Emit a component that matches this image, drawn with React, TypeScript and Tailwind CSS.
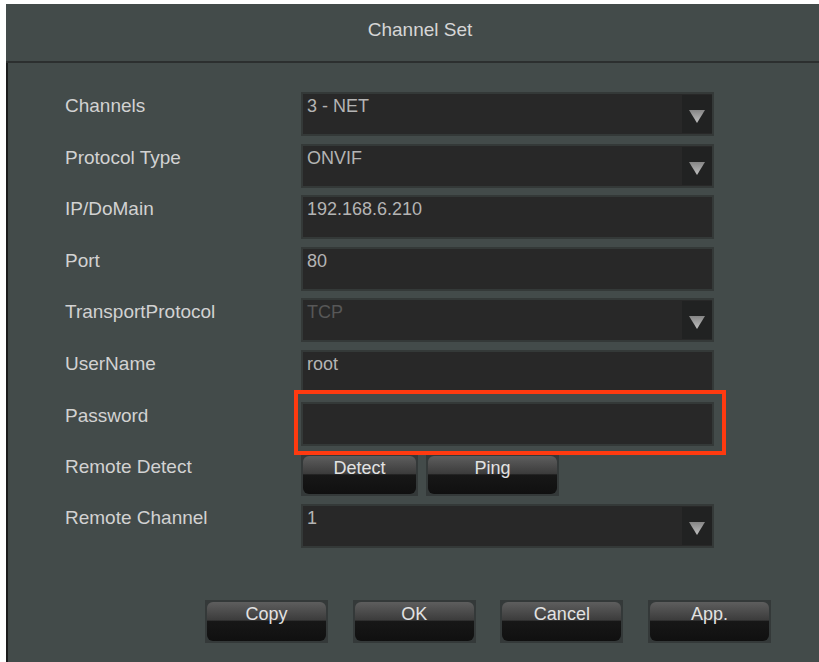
import React from 'react';

type Row = {
  label: string;
  value?: string;
  kind: 'select' | 'text' | 'buttons';
  dim?: boolean;
  marked?: boolean;
};

const rows: Row[] = [
  { label: 'Channels', value: '3 - NET', kind: 'select' },
  { label: 'Protocol Type', value: 'ONVIF', kind: 'select' },
  { label: 'IP/DoMain', value: '192.168.6.210', kind: 'text' },
  { label: 'Port', value: '80', kind: 'text' },
  { label: 'TransportProtocol', value: 'TCP', kind: 'select', dim: true },
  { label: 'UserName', value: 'root', kind: 'text' },
  { label: 'Password', value: '', kind: 'text', marked: true },
  { label: 'Remote Detect', kind: 'buttons' },
  { label: 'Remote Channel', value: '1', kind: 'select' },
];

const font = { fontFamily: '"Liberation Sans", Arial, sans-serif' };

function DropArrow() {
  return (
    <div className="w-[30px] my-[1px] bg-[#212222] flex items-end justify-center pb-[10px]">
      <svg width="16" height="13" viewBox="0 0 16 13">
        <defs>
          <linearGradient id="arrowFill" x1="0" y1="0" x2="0" y2="1">
            <stop offset="0" stopColor="#858585" />
            <stop offset="1" stopColor="#c0c0c0" />
          </linearGradient>
        </defs>
        <polygon points="0,0 16,0 8,13" fill="url(#arrowFill)" />
      </svg>
    </div>
  );
}

function Field({ row }: { row: Row }) {
  return (
    <div className="relative w-[413px] h-[44px] bg-[#282828] border-2 border-[#343938] flex">
      <div
        className={`flex-1 pl-[4px] pt-[3px] text-[18px] leading-[18px] ${
          row.dim ? 'text-[#575757]' : 'text-[#b4b4b4]'
        }`}
      >
        {row.value}
      </div>
      {row.kind === 'select' && <DropArrow />}
      {row.marked && (
        <div className="absolute left-[-9px] right-[-14px] top-[-14px] bottom-[-11px] border-4 border-[#ff3a10] pointer-events-none" />
      )}
    </div>
  );
}

function DvrButton({ text, w, h }: { text: string; w: string; h: string }) {
  return (
    <button className={`${w} ${h} p-[2px] bg-[#343939]`}>
      <div className="h-full w-full rounded-[6px] bg-[linear-gradient(to_bottom,#5e5e5e_0%,#3c3c3c_46%,#171717_50%,#101010_100%)] flex justify-center pt-[3px] text-[18px] leading-[18px] text-[#e2e2e2]">
        {text}
      </div>
    </button>
  );
}

export default function App() {
  return (
    <div className="w-[819px] h-[662px] bg-white pl-[6px] pt-[4px] overflow-hidden" style={font}>
      <div className="h-[658px] bg-[#434b4a] flex flex-col">
        <div className="h-[57px] pt-[16px] pl-[15px] text-center text-[19px] leading-[19px] text-[#d6d6d6]">
          Channel Set
        </div>
        <div className="h-[2px] bg-[#2c2f2f]" />
        <div className="flex-1 border-l-2 border-[#1b1c1c] pt-[29px]">
          <div className="flex flex-col gap-[7.6px]">
            {rows.map((row) => (
              <div key={row.label} className="flex items-start pl-[57px]">
                <div className="w-[236px] pt-[4px] text-[19px] leading-[19px] text-[#d2d2d2]">
                  {row.label}
                </div>
                {row.kind === 'buttons' ? (
                  <div className="flex gap-[8px] pt-[1px]">
                    <DvrButton text="Detect" w="w-[117px]" h="h-[42px]" />
                    <DvrButton text="Ping" w="w-[133px]" h="h-[42px]" />
                  </div>
                ) : (
                  <Field row={row} />
                )}
              </div>
            ))}
          </div>
          <div className="flex gap-[24.7px] pl-[197px] mt-[52px]">
            <DvrButton text="Copy" w="w-[123px]" h="h-[43px]" />
            <DvrButton text="OK" w="w-[123px]" h="h-[43px]" />
            <DvrButton text="Cancel" w="w-[123px]" h="h-[43px]" />
            <DvrButton text="App." w="w-[123px]" h="h-[43px]" />
          </div>
        </div>
      </div>
    </div>
  );
}
